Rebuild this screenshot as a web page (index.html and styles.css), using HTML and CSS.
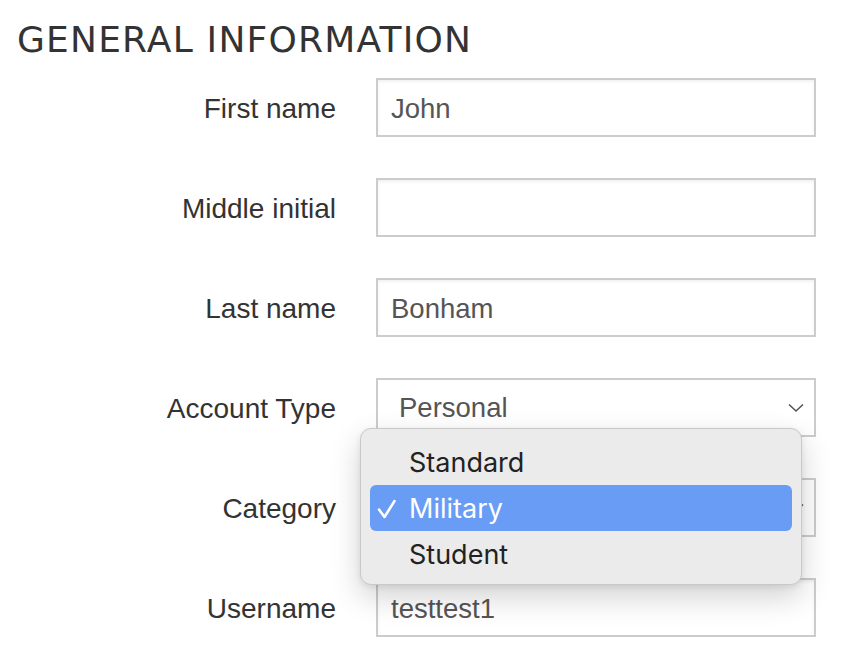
FILE: index.html
```html
<!DOCTYPE html>
<html>
<head>
<meta charset="utf-8">
<link rel="stylesheet" href="styles.css">
</head>
<body>
<div class="page">
  <h1 class="title">GENERAL INFORMATION</h1>
  <form class="form">
    <label class="label">First name</label>
    <div class="field"><div class="input">John</div></div>

    <label class="label">Middle initial</label>
    <div class="field"><div class="input"></div></div>

    <label class="label">Last name</label>
    <div class="field"><div class="input">Bonham</div></div>

    <label class="label">Account Type</label>
    <div class="field">
      <div class="input select">
        <span class="sel-text">Personal</span>
        <svg class="chev" width="16" height="10" viewBox="0 0 16 10"><path d="M1 1.5 L8 8 L15 1.5" fill="none" stroke="#555" stroke-width="1.6"/></svg>
      </div>
      <div class="menu">
        <div class="item"><span class="check"></span>Standard</div>
        <div class="item active"><span class="check"><svg width="19" height="20" viewBox="0 0 19 20"><path d="M2 10.5 L7.5 18 L17.5 2" fill="none" stroke="#fff" stroke-width="2.6" stroke-linecap="round" stroke-linejoin="round"/></svg></span>Military</div>
        <div class="item"><span class="check"></span>Student</div>
      </div>
    </div>

    <label class="label">Category</label>
    <div class="field">
      <div class="input select">
        <span class="sel-text"></span>
        <svg class="chev" width="16" height="10" viewBox="0 0 16 10"><path d="M1 1.5 L8 8 L15 1.5" fill="none" stroke="#555" stroke-width="1.6"/></svg>
      </div>
    </div>

    <label class="label">Username</label>
    <div class="field"><div class="input">testtest1</div></div>
  </form>
</div>
</body>
</html>
```

FILE: styles.css
```css
html, body {
  margin: 0;
  padding: 0;
  background: #ffffff;
}
.page {
  width: 842px;
  height: 652px;
  overflow: hidden;
  position: relative;
}
.title {
  margin: 0;
  padding: 22px 0 0 17px;
  height: 58px;
  box-sizing: border-box;
  font-family: "DejaVu Sans", sans-serif;
  font-weight: normal;
  font-size: 36px;
  line-height: 36px;
  letter-spacing: 1.2px;
  color: #333;
}
.form {
  display: grid;
  grid-template-columns: 336px 440px;
  column-gap: 40px;
  row-gap: 41px;
  grid-auto-rows: 59px;
  margin-top: 20px;
}
.label {
  display: flex;
  align-items: center;
  justify-content: flex-end;
  padding-top: 2px;
  font-family: "Liberation Sans", Arial, sans-serif;
  font-size: 28px;
  color: #333;
}
.field {
  position: relative;
}
.input {
  height: 59px;
  box-sizing: border-box;
  border: 2px solid #cccccc;
  box-shadow: inset 0 2px 3px rgba(0,0,0,0.06);
  padding: 2px 13px 0;
  display: flex;
  align-items: center;
  font-family: "Liberation Sans", Arial, sans-serif;
  font-size: 27.5px;
  color: #555;
  background: #fff;
}
.select {
  justify-content: space-between;
  padding: 0 10px 0 21px;
  box-shadow: none;
}
.chev {
  display: block;
}
.menu {
  position: absolute;
  top: 50px;
  left: -16px;
  width: 442px;
  height: 157px;
  box-sizing: border-box;
  background: #ebebeb;
  border: 1px solid #c9c9c9;
  border-radius: 11px;
  box-shadow: 0 12px 30px rgba(0,0,0,0.18), 0 2px 6px rgba(0,0,0,0.08);
  padding: 10px 9px;
  display: flex;
  flex-direction: column;
  z-index: 5;
}
.item {
  height: 46px;
  flex: 0 0 46px;
  display: flex;
  align-items: center;
  font-family: "Inter", "Noto Sans", sans-serif;
  font-size: 27px;
  color: #222;
  border-radius: 6px;
}
.item.active {
  background: #699cf5;
  color: #fff;
}
.check {
  width: 39px;
  padding-left: 7px;
  box-sizing: border-box;
  display: flex;
  align-items: center;
  padding-top: 2px;
}
.check svg {
  display: block;
}
```
